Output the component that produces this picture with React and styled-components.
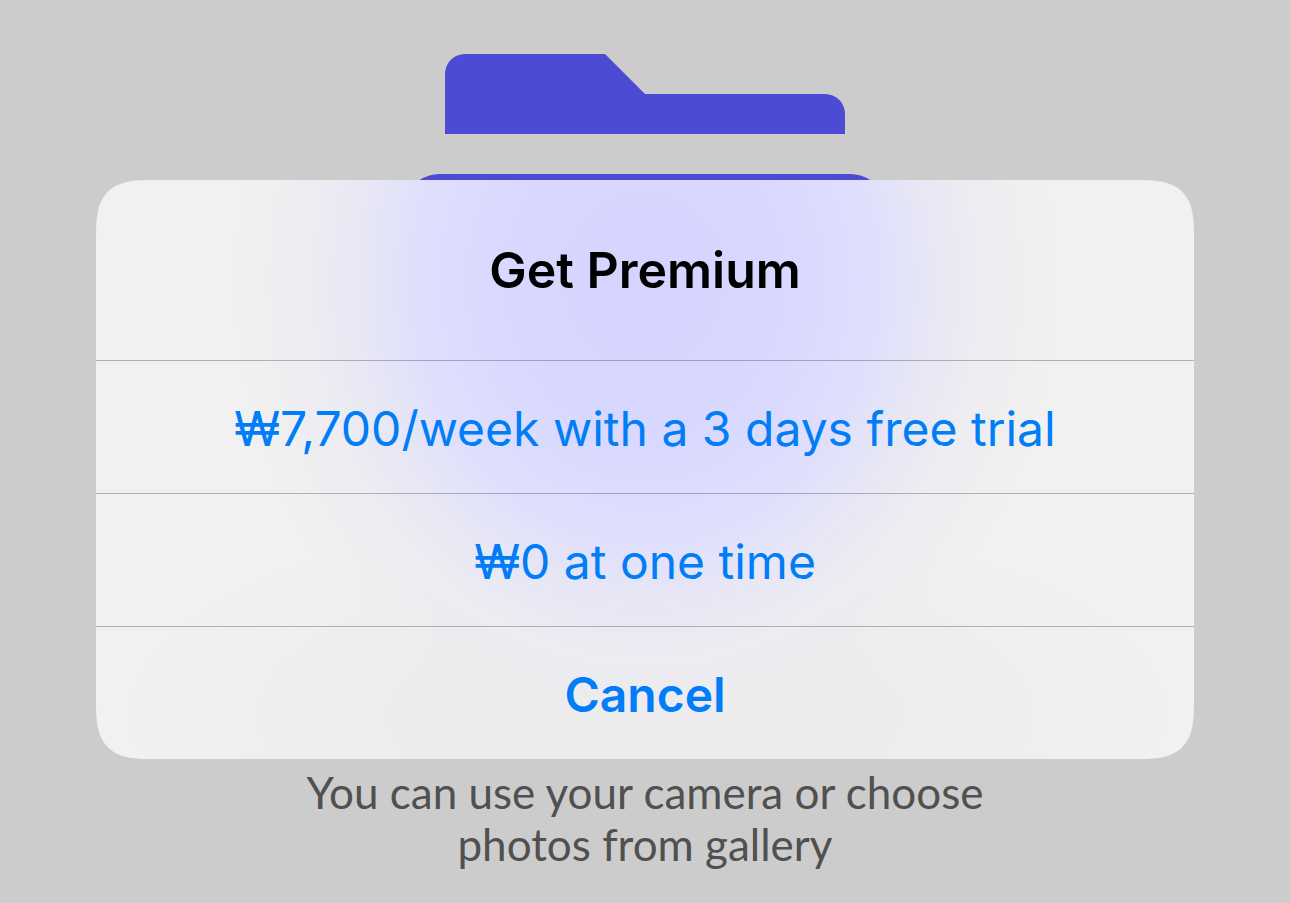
import React from "react";
import styled, { createGlobalStyle } from "styled-components";

const GlobalStyle = createGlobalStyle`
  * { box-sizing: border-box; }
  html, body { margin: 0; }
  body {
    background: #cccccc;
    font-family: Inter, "Noto Sans", sans-serif;
  }
`;

const Page = styled.div`
  position: relative;
  min-height: 100vh;
  background: #cccccc;
`;

const Scene = styled.main`
  display: flex;
  flex-direction: column;
  align-items: center;
  gap: 72px;
  padding: 54px 24px 30px;
`;

const Folder = styled.svg`
  display: block;
  width: 480px;
  height: 640px;
  fill: #4d4bd3;
`;

const Caption = styled.p`
  margin: 0;
  max-width: 760px;
  color: #505050;
  font-family: Lato, sans-serif;
  font-size: 44px;
  line-height: 52px;
  text-align: center;
`;

const Overlay = styled.div`
  position: absolute;
  inset: 0;
  padding: 180px 96px 0;
`;

const Dialog = styled.section`
  display: flex;
  flex-direction: column;
  overflow: hidden;
  border-radius: 42px;
  background:
    radial-gradient(
      ellipse 410px 460px at 50% 100px,
      #d5d4ff 0%,
      #d8d7ff 30%,
      #dbdbff 44%,
      #dfdffd 56%,
      #e6e6f6 68%,
      rgba(236, 236, 242, 0.9) 82%,
      rgba(239, 239, 240, 0) 100%
    ),
    radial-gradient(ellipse 520px 200px at 50% 92%, #ececed 0%, #ededed 50%, rgba(241, 241, 241, 0) 100%),
    #f1f1f1;

  @supports (corner-shape: superellipse(1.6)) {
    border-radius: 58px;
    corner-shape: superellipse(1.6);
  }
`;

const Title = styled.h2`
  margin: 0;
  padding: 60px 24px;
  color: #000;
  font-size: 50px;
  font-weight: 600;
  line-height: 60px;
  text-align: center;
`;

const Action = styled.button`
  margin: 0;
  padding: 38px 24px 34px;
  border: 0;
  border-top: 1px solid rgba(60, 60, 67, 0.36);
  background: transparent;
  color: #007df7;
  font-family: inherit;
  font-size: 48px;
  font-weight: ${(p) => (p.$strong ? 600 : 400)};
  line-height: 60px;
  text-align: center;
  cursor: pointer;
`;

const options = [
  { label: "₩7,700/week with a 3 days free trial" },
  { label: "₩0 at one time" },
  { label: "Cancel", strong: true },
];

export default function App() {
  return (
    <Page>
      <GlobalStyle />
      <Scene>
        <Folder viewBox="0 0 480 640" aria-hidden="true">
          <path d="M40 80V20A20 20 0 0 1 60 0H200L240 40H420A20 20 0 0 1 440 60V80Z" />
          <path d="M35 120H445C465 120 480 135 480 155L460 500A40 40 0 0 1 420 540H60A40 40 0 0 1 20 500L0 155C0 135 15 120 35 120Z" />
        </Folder>
        <Caption>
          You can use your camera or choose
          <br />
          photos from gallery
        </Caption>
      </Scene>
      <Overlay>
        <Dialog role="dialog" aria-modal="true" aria-labelledby="premium-title">
          <Title id="premium-title">Get Premium</Title>
          {options.map((o) => (
            <Action key={o.label} type="button" $strong={o.strong}>
              {o.label}
            </Action>
          ))}
        </Dialog>
      </Overlay>
    </Page>
  );
}
